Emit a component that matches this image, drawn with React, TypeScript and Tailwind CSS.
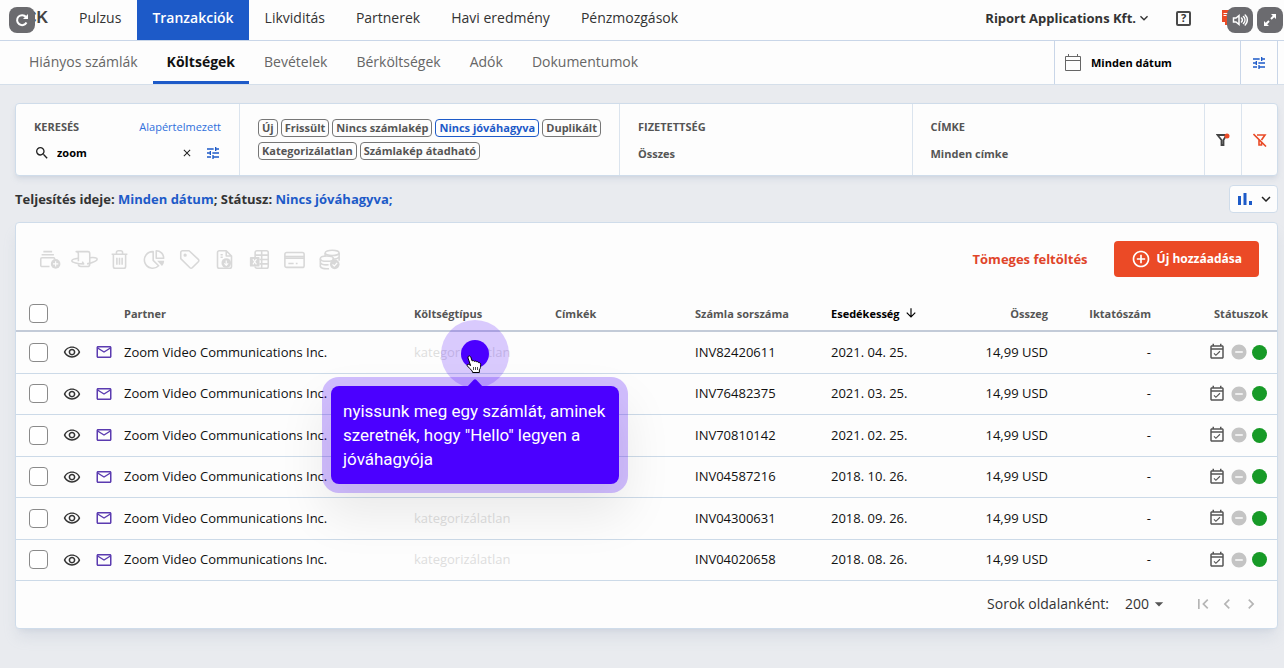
import type { ReactNode } from 'react';
import {
  MdAddCircleOutline,
  MdArrowDownward,
  MdArrowDropDown,
  MdChevronLeft,
  MdChevronRight,
  MdClose,
  MdFirstPage,
  MdKeyboardArrowDown,
  MdMailOutline,
  MdOutlineEventAvailable,
  MdOutlineRemoveRedEye,
  MdRemoveCircle,
  MdSearch,
  MdTune,
} from 'react-icons/md';

const mainNav = ['Pulzus', 'Tranzakciók', 'Likviditás', 'Partnerek', 'Havi eredmény', 'Pénzmozgások'];

const subNav = ['Hiányos számlák', 'Költségek', 'Bevételek', 'Bérköltségek', 'Adók', 'Dokumentumok'];

const statusTags = [
  'Új',
  'Frissült',
  'Nincs számlakép',
  'Nincs jóváhagyva',
  'Duplikált',
  'Kategorizálatlan',
  'Számlakép átadható',
];

const invoices = [
  { number: 'INV82420611', due: '2021. 04. 25.', category: 'kategorizálatlan' },
  { number: 'INV76482375', due: '2021. 03. 25.', category: '' },
  { number: 'INV70810142', due: '2021. 02. 25.', category: '' },
  { number: 'INV04587216', due: '2018. 10. 26.', category: '' },
  { number: 'INV04300631', due: '2018. 09. 26.', category: 'kategorizálatlan' },
  { number: 'INV04020658', due: '2018. 08. 26.', category: 'kategorizálatlan' },
];

const tools: { label: string; icon: ReactNode }[] = [
  {
    label: 'Hozzáadás köteghez',
    icon: (
      <>
        <path d="M5 3h10M3 6.5h14M12 20H3.5A1.5 1.5 0 0 1 2 18.500v-7A1.500 1.500 0 0 1 3.500 10h13a1.500 1.500 0 0 1 1.500 1.500" />
        <circle cx="19" cy="17" r="5.500" fill="currentColor" stroke="none" />
        <path d="M19 14v6M16 17h6" stroke="#fdfdfd" strokeWidth="1.300" />
      </>
    ),
  },
  {
    label: 'Átmozgatás',
    icon: (
      <>
        <path d="M5 14V5.500C5 4 4 3 2.500 3H16c1.500 0 2 1 2 2.500V17c0 1.500-1 3-2.500 3H8c-2 0-3-1-3-2.500" />
        <path d="M5 10.500c-4 .5-7.500 1.500-7.500 3 0 2 7 3.500 13.500 3.500l-1.500-2.500M18 10c5-.5 8.500 0 8.500 1.500 0 2.500-6.500 4.500-11.500 5.500" />
      </>
    ),
  },
  {
    label: 'Törlés',
    icon: <path d="M3 6h18M5 6v14a2 2 0 0 0 2 2h10a2 2 0 0 0 2-2V6M8.500 6V4a2 2 0 0 1 2-2h3a2 2 0 0 1 2 2v2M9 10v8M12 10v8M15 10v8" />,
  },
  {
    label: 'Felosztás',
    icon: (
      <>
        <path d="M10.500 3a9.500 9.500 0 1 0 6.200 16.200L10.500 13z" />
        <path d="M14 2v8.500h8.500A8.500 8.500 0 0 0 14 2z" />
        <path d="M15 13.500h8c0 2.500-1 4.500-2.500 6z" fill="currentColor" stroke="none" />
      </>
    ),
  },
  {
    label: 'Címkézés',
    icon: (
      <>
        <path d="M2 4v7l10.500 10.500a1.800 1.800 0 0 0 2.600 0l7-7a1.800 1.800 0 0 0 0-2.600L11.500 2H4a2 2 0 0 0-2 2z" />
        <circle cx="7" cy="7" r="1" fill="currentColor" />
      </>
    ),
  },
  {
    label: 'Letöltés',
    icon: (
      <>
        <path d="M14 2H6a2 2 0 0 0-2 2v16a2 2 0 0 0 2 2h12a2 2 0 0 0 2-2V8zM14 2v6h6M7.500 6.500H10M7.500 9.500H10" />
        <circle cx="14" cy="16" r="5.500" fill="currentColor" stroke="none" />
        <path d="M14 13v5.500M11.800 16.500l2.200 2.200 2.200-2.200" stroke="#fdfdfd" strokeWidth="1.300" />
      </>
    ),
  },
  {
    label: 'Excel export',
    icon: (
      <>
        <path d="M7 9V4a2 2 0 0 1 2-2h11a2 2 0 0 1 2 2v16a2 2 0 0 1-2 2H9a2 2 0 0 1-2-2M14.500 2v20M7 7h15M12 12h10M12 17h10" />
        <rect x="1" y="9" width="11" height="11" rx="1" fill="currentColor" stroke="none" />
        <path d="M4.500 11.500l4 6M8.500 11.500l-4 6" stroke="#fdfdfd" strokeWidth="1.300" />
      </>
    ),
  },
  {
    label: 'Fizetés',
    icon: (
      <>
        <rect x="1" y="4" width="22" height="17" rx="2" />
        <path d="M1 8.500h22M1 10.500h22M5 16.500h6M13.500 16.500h2" />
      </>
    ),
  },
  {
    label: 'Kifizetettnek jelölés',
    icon: (
      <>
        <ellipse cx="15" cy="4.500" rx="8" ry="3" />
        <path d="M7 4.500V8M23 4.500v9M23 9c-1 1.500-4 2.500-7.500 2.500" />
        <ellipse cx="9" cy="11" rx="7.500" ry="3" />
        <path d="M1.500 11v9c1 1.800 5 3 10 2.500M1.500 15.500c1 1.800 5 3 9.500 2.500" />
        <circle cx="18" cy="17.500" r="5.500" fill="currentColor" stroke="none" />
        <path d="M15.500 17.500l2 2 3.200-3.500" stroke="#fdfdfd" strokeWidth="1.400" />
      </>
    ),
  },
];

function PlayerButton({ label, children }: { label: string; children: ReactNode }) {
  return (
    <button
      type="button"
      aria-label={label}
      className="flex size-[26px] items-center justify-center rounded-lg bg-[#6b6b6f] text-white"
    >
      {children}
    </button>
  );
}

function Checkbox({ label }: { label: string }) {
  return (
    <input
      type="checkbox"
      aria-label={label}
      className="block size-[19px] appearance-none rounded border border-[#8a8a8a] bg-white checked:bg-[#1d5ac8]"
    />
  );
}

function TopBar() {
  return (
    <header className="relative flex h-[41px] items-stretch justify-between border-b border-[#c9d6e8] bg-[#fdfdfd]">
      <div className="flex">
        <a
          href="#"
          aria-label="TICK"
          className="flex w-16 items-center pb-1 pl-[25px] font-['Liberation_Sans_Narrow','Liberation_Sans',sans-serif] text-base font-bold text-[#444]"
        >
          CK
        </a>
        <nav className="flex gap-px">
          {mainNav.map((item) => (
            <a
              key={item}
              href="#"
              className={
                item === 'Tranzakciók'
                  ? 'flex items-center bg-[#1d5ac8] px-[15px] pb-1 font-semibold text-white'
                  : 'flex items-center px-[15px] pb-1 text-[#333]'
              }
            >
              {item}
            </a>
          ))}
        </nav>
      </div>
      <div className="flex items-center pr-[46px] pb-1">
        <button type="button" className="flex items-center text-[13px] font-bold text-[#333]">
          Riport Applications Kft.
          <MdKeyboardArrowDown className="size-4" />
        </button>
        <button
          type="button"
          aria-label="Súgó"
          className="ml-6 flex size-[15px] items-center justify-center rounded-xs border-2 border-[#4a4a4a] text-[11px] font-bold text-[#333]"
        >
          ?
        </button>
        <svg viewBox="0 0 16 16" className="ml-[31px] size-4 text-[#e94b27]" fill="currentColor">
          <path d="M0 0h8v12H0zM3 12h5v3H3z" />
          <path d="M1.500 3.500h5M1.500 5.500h3" stroke="#fff" />
        </svg>
      </div>
      <div className="absolute top-[7px] left-[9px]">
        <PlayerButton label="Újraindítás">
          <svg viewBox="0 0 16 16" className="size-4" fill="none" stroke="currentColor" strokeWidth="2">
            <path d="M12.500 10.500A5 5 0 1 1 12 5" />
            <path d="M14 2v5H9z" fill="currentColor" stroke="none" />
          </svg>
        </PlayerButton>
      </div>
      <div className="absolute top-[7px] right-[1px] flex gap-1">
        <PlayerButton label="Hang">
          <svg viewBox="0 0 16 16" className="size-4" fill="none" stroke="currentColor" strokeWidth="1.500" strokeLinecap="round">
            <path d="M1.500 6h2.500l3-2.500v9L4 10H1.500z" />
            <path d="M9.500 6a3 3 0 0 1 0 4M11.500 4.500a5 5 0 0 1 0 7M13.200 3a7 7 0 0 1 0 10" />
          </svg>
        </PlayerButton>
        <PlayerButton label="Teljes képernyő">
          <svg viewBox="0 0 16 16" className="size-4" fill="currentColor">
            <path d="M9 2h5v5zM2 9v5h5z" />
            <path d="M12.500 3.500L9 7M7 9l-3.500 3.500" stroke="currentColor" strokeWidth="2" />
          </svg>
        </PlayerButton>
      </div>
    </header>
  );
}

function SubBar() {
  return (
    <div className="flex h-11 justify-between border-b border-[#d5dfea] bg-[#fdfdfd]">
      <nav className="flex gap-px pl-[15px]">
        {subNav.map((item) => (
          <a
            key={item}
            href="#"
            className={
              item === 'Költségek'
                ? 'flex items-center rounded-t-xs border-b-3 border-[#1d5ac8] px-3.5 pt-0.5 font-bold text-[#111]'
                : 'flex items-center border-b-3 border-transparent px-3.5 pt-0.5 text-[#666]'
            }
          >
            {item}
          </a>
        ))}
      </nav>
      <div className="flex pr-1.5 text-[11px] font-bold">
        <button type="button" className="flex w-[186px] items-center gap-2.5 border-l border-[#c9d6e8] pl-2.5 text-black">
          <svg viewBox="0 0 16 18" className="h-[18px] w-4 text-[#666]" fill="none" stroke="currentColor">
            <path d="M.5 2.500h15v14H.5zM.5 6.500h15M3.500 0v2.500M12.500 0v2.500" />
          </svg>
          Minden dátum
        </button>
        <button type="button" aria-label="Dátum szűrő" className="flex w-[38px] items-center justify-center border-x border-[#c9d6e8]">
          <MdTune className="size-4 text-[#1d5ac8]" />
        </button>
      </div>
    </div>
  );
}

function Filters() {
  return (
    <section className="flex h-[73px] rounded border border-[#cfdcea] bg-[#fdfdfd] text-[11px] font-bold text-[#555] shadow-md shadow-slate-400/20">
      <div className="w-[223px] px-[18px] pt-[15px]">
        <div className="flex items-center justify-between">
          <label htmlFor="search">KERESÉS</label>
          <a href="#" className="font-normal text-[#2f6fdc]">Alapértelmezett</a>
        </div>
        <div className="mt-2.5 flex items-center">
          <MdSearch className="size-4 text-[#222]" />
          <input id="search" defaultValue="zoom" className="ml-[7px] w-full min-w-0 flex-1 bg-transparent text-black outline-none" />
          <button type="button" aria-label="Keresés törlése" className="text-[#222]">
            <MdClose className="size-3" />
          </button>
          <button type="button" aria-label="Keresés beállításai" className="ml-3 text-[#1d5ac8]">
            <MdTune className="size-4" />
          </button>
        </div>
      </div>
      <div className="flex w-[380px] flex-wrap content-start gap-x-[3px] gap-y-[5px] border-l border-[#dbe4ee] pt-[15px] pr-3 pl-[18px]">
        {statusTags.map((tag) => (
          <button
            key={tag}
            type="button"
            className={
              tag === 'Nincs jóváhagyva'
                ? 'h-[18px] rounded border border-[#1d5ac8] px-[3px] leading-4 text-[#1d5ac8]'
                : 'h-[18px] rounded border border-[#777] px-[3px] leading-4'
            }
          >
            {tag}
          </button>
        ))}
      </div>
      <div className="flex flex-1 flex-col items-start border-l border-[#dbe4ee] pt-[15px] pl-[18px]">
        <label htmlFor="payment">FIZETETTSÉG</label>
        <select id="payment" className="mt-[11px] appearance-none bg-transparent">
          <option>Összes</option>
        </select>
      </div>
      <div className="flex flex-1 flex-col items-start border-l border-[#dbe4ee] pt-[15px] pl-[18px]">
        <label htmlFor="tag">CÍMKE</label>
        <select id="tag" className="mt-[11px] appearance-none bg-transparent">
          <option>Minden címke</option>
        </select>
      </div>
      <button type="button" aria-label="Szűrők" className="flex w-[37px] items-center justify-center border-l border-[#dbe4ee]">
        <svg viewBox="0 0 14 14" className="size-3.5 text-[#444]" fill="none" stroke="currentColor" strokeWidth="1.800">
          <path d="M1.500 2h9L7.500 7v5h-2V7z" />
          <circle cx="11" cy="3" r="2.500" fill="#e94b27" stroke="none" />
        </svg>
      </button>
      <button type="button" aria-label="Szűrők törlése" className="flex w-9 items-center justify-center border-l border-[#dbe4ee]">
        <svg viewBox="0 0 14 14" className="size-3.5 text-[#e94b27]" fill="none" stroke="currentColor" strokeWidth="1.600">
          <path d="M4 2h8L8.500 7M6 7v5h2.500V9.500M.5 1l12.500 12.500" />
        </svg>
      </button>
    </section>
  );
}

// guided tour marker with the hand cursor and its message, hung on the first row's category cell
function TourHint() {
  return (
    <div className="absolute top-1/2 left-[61px] z-10">
      <div className="absolute -top-8 -left-[34px] flex size-[68px] items-center justify-center rounded-full bg-[#4b00ff]/20">
        <div className="size-7 rounded-full bg-[#4b00ff]" />
      </div>
      <div className="absolute top-[34px] -left-36 w-72 rounded-lg bg-[#4b00ff] px-3 py-[13px] font-[Roboto,sans-serif] text-[17px] leading-6 text-white shadow-[0_24px_48px_8px_rgba(0,0,0,0.08)] ring-9 ring-[#4b00ff]/25">
        <svg viewBox="0 0 16 8" className="absolute -top-[7px] left-[136px] h-2 w-4" fill="#4b00ff">
          <path d="M0 8l6.500-7a2 2 0 0 1 3 0L16 8z" />
        </svg>
        nyissunk meg egy számlát, aminek szeretnék, hogy "Hello" legyen a jóváhagyója
      </div>
      <svg viewBox="0 0 16 18" className="absolute top-[3px] -left-[9px] h-[18px] w-4" fill="#fff" stroke="#000" strokeLinejoin="round">
        <path d="M2.500 1.200c1-.6 2 0 2.300 1L6.200 6c.7-.7 1.900-.5 2.200.4.800-.6 2-.4 2.300.5.800-.5 1.800-.1 2 .8 1-.2 2 .4 2 1.500 0 3-.3 4-1.300 5.600v2.700H6.600L6.200 16C4.800 14.200 3 13 1.400 11c-.8-1.100.3-2.400 1.600-1.600l1.600 1.200L2 3c-.2-.8 0-1.400.5-1.800z" />
        <path d="M7.500 12v3M9.500 12v3M11.500 12v3" strokeWidth=".7" />
      </svg>
    </div>
  );
}

function InvoiceTable() {
  return (
    <table className="w-full table-fixed border-collapse text-left">
      <colgroup>
        <col className="w-10" />
        <col className="w-8" />
        <col className="w-9" />
        <col />
        <col className="w-[141px]" />
        <col className="w-[140px]" />
        <col className="w-[136px]" />
        <col className="w-[115px]" />
        <col className="w-[102px]" />
        <col className="w-[103px]" />
        <col className="w-[126px]" />
      </colgroup>
      <thead className="text-[11px] text-[#555]">
        <tr className="h-[34px] border-b-2 border-[#c3cbd8]">
          <th className="pl-[13px]"><Checkbox label="Összes kijelölése" /></th>
          <th />
          <th />
          <th>Partner</th>
          <th>Költségtípus</th>
          <th>Címkék</th>
          <th>Számla sorszáma</th>
          <th className="text-black">
            <div className="flex items-center gap-1">
              Esedékesség <MdArrowDownward className="size-3.5" />
            </div>
          </th>
          <th className="text-right">Összeg</th>
          <th className="text-right">Iktatószám</th>
          <th className="pr-[9px] text-right">Státuszok</th>
        </tr>
      </thead>
      <tbody className="text-[13px] text-[#111]">
        {invoices.map((invoice, i) => (
          <tr key={invoice.number} className="h-[42px] border-b border-[#ccdae8] even:h-[41px]">
            <td className="pl-[13px]"><Checkbox label={invoice.number} /></td>
            <td>
              <button type="button" aria-label="Megtekintés" className="mx-auto block text-[#333]">
                <MdOutlineRemoveRedEye className="size-[18px]" />
              </button>
            </td>
            <td className="pl-[7px]">
              <button type="button" aria-label="E-mail" className="block text-[#5b3bb0]">
                <MdMailOutline className="size-[18px]" />
              </button>
            </td>
            <td>Zoom Video Communications Inc.</td>
            <td className="relative text-[#dedede]">
              {invoice.category}
              {i === 0 && <TourHint />}
            </td>
            <td />
            <td>{invoice.number}</td>
            <td>{invoice.due}</td>
            <td className="text-right">14,99 USD</td>
            <td className="text-right">-</td>
            <td className="pr-2.5">
              <div className="flex items-center justify-end gap-1">
                <MdOutlineEventAvailable className="size-[18px] text-[#555]" />
                <MdRemoveCircle className="size-[18px] text-[#c4c4c4]" />
                <span className="size-[15px] rounded-full bg-[#179a27]" />
              </div>
            </td>
          </tr>
        ))}
      </tbody>
    </table>
  );
}

export default function App() {
  return (
    <div className="min-h-screen bg-[#e9ebef] pb-10 font-['Open_Sans',sans-serif] text-sm">
      <TopBar />
      <SubBar />
      <main className="pt-[18px] pr-1.5 pl-[15px]">
        <Filters />
        <div className="flex h-[46px] items-center justify-between">
          <p className="text-[13px] font-bold text-[#333]">
            Teljesítés ideje: <a href="#" className="text-[#1d5ac8]">Minden dátum</a>; Státusz:{' '}
            <a href="#" className="text-[#1d5ac8]">Nincs jóváhagyva;</a>
          </p>
          <button type="button" aria-label="Grafikon" className="flex h-7 w-[49px] items-center justify-between rounded border border-[#cfdcea] bg-[#fdfdfd] pr-0.5 pl-2">
            <svg viewBox="0 0 14 14" className="size-3.5 text-[#1d5ac8]" fill="currentColor">
              <path d="M0 4h3v9H0zM5.500 1h3v12h-3zM11 9h3v4h-3z" />
            </svg>
            <MdKeyboardArrowDown className="size-[18px] text-[#222]" />
          </button>
        </div>
        <section className="rounded border border-[#cfdcea] bg-[#fdfdfd] shadow-lg shadow-slate-400/20">
          <div className="flex h-[74px] items-center justify-between pr-[18px] pb-0.5 pl-[21px]">
            <div className="flex items-center gap-[11px] text-[#d8d8d8]">
              {tools.map((tool) => (
                <button key={tool.label} type="button" aria-label={tool.label} className="flex w-6 justify-center">
                  <svg viewBox="0 0 24 24" className="size-[21px] overflow-visible" fill="none" stroke="currentColor" strokeWidth="1.800" strokeLinejoin="round">
                    {tool.icon}
                  </svg>
                </button>
              ))}
            </div>
            <div className="flex items-center gap-[26px] text-[13px] font-bold">
              <button type="button" className="text-[#e0452a]">Tömeges feltöltés</button>
              <button type="button" className="flex h-9 items-center gap-1.5 rounded bg-[#eb4a26] px-[17px] text-xs text-white">
                <MdAddCircleOutline className="size-5" />
                Új hozzáadása
              </button>
            </div>
          </div>
          <InvoiceTable />
          <div className="flex h-[47px] items-center justify-end pr-4 text-[#333]">
            <label htmlFor="page-size">Sorok oldalanként:</label>
            <span className="relative ml-4 flex items-center">
              <select id="page-size" className="w-11 appearance-none bg-transparent">
                <option>200</option>
              </select>
              <MdArrowDropDown className="pointer-events-none absolute right-0 size-5 text-[#555]" />
            </span>
            <div className="ml-6 flex gap-1 text-[#b5b5b5]">
              <button type="button" aria-label="Első oldal"><MdFirstPage className="size-5" /></button>
              <button type="button" aria-label="Előző oldal"><MdChevronLeft className="size-5" /></button>
              <button type="button" aria-label="Következő oldal"><MdChevronRight className="size-5" /></button>
            </div>
          </div>
        </section>
      </main>
    </div>
  );
}
